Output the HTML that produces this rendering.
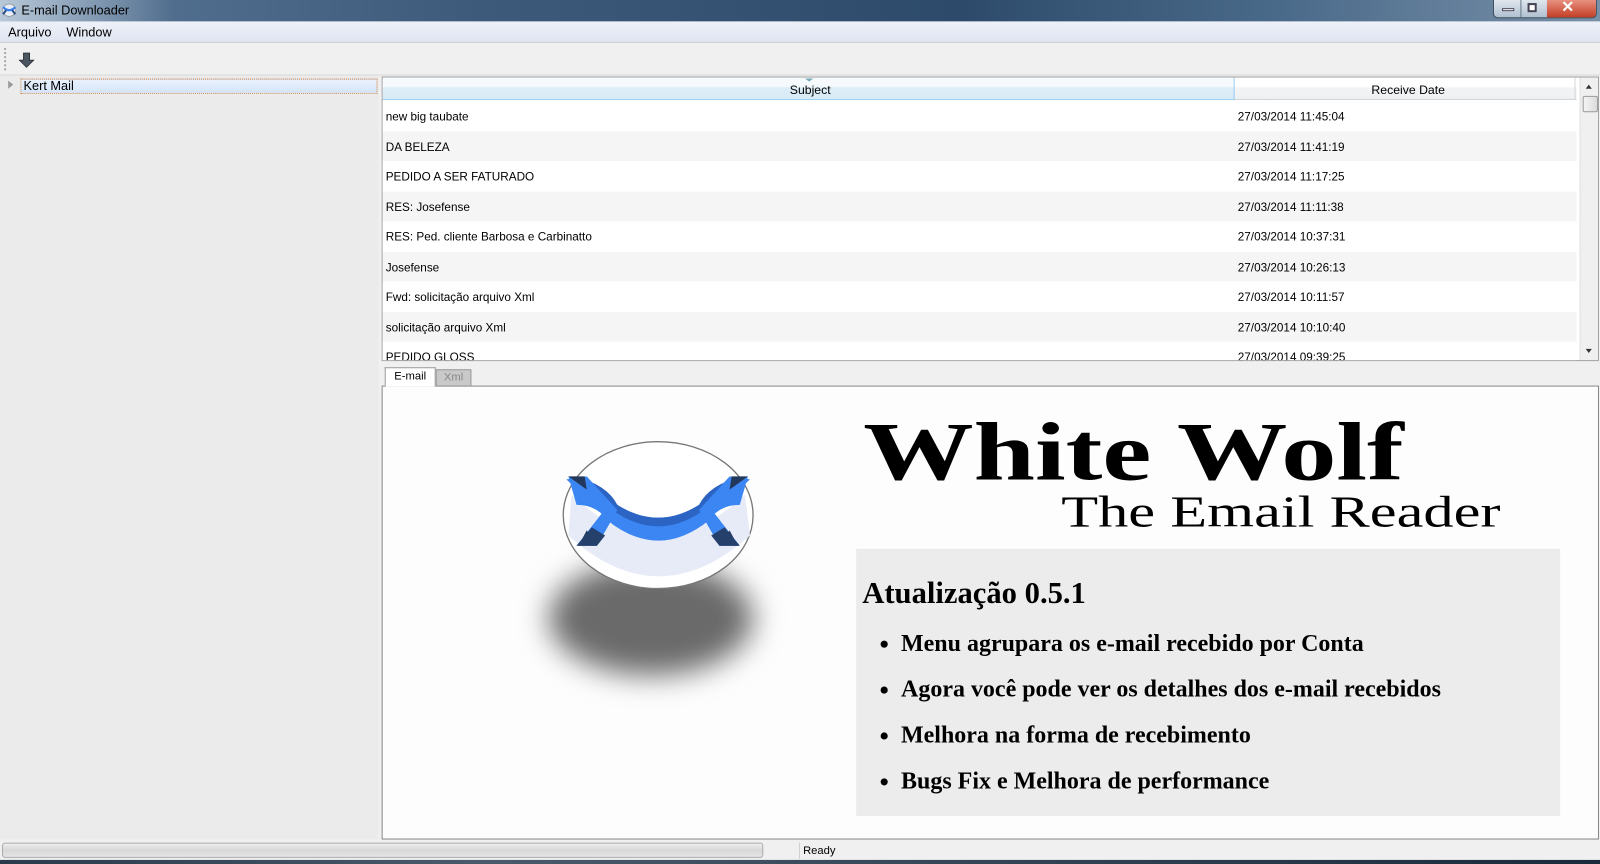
<!DOCTYPE html>
<html><head><meta charset="utf-8"><style>
*{margin:0;padding:0;box-sizing:border-box}
body{width:1600px;height:864px;background:#f0f0f0;position:relative;overflow:hidden;font-family:"Liberation Sans",sans-serif;font-size:12px;color:#000}
.a{position:absolute}
.app{left:0;top:0;width:1568px;height:847px;background:#f0f0f0;overflow:hidden;transform:scale(1.02041,1.02007);transform-origin:0 0}
.row{position:absolute;left:0;width:1170px;height:29.5px;line-height:33px}
.row span{position:absolute;white-space:nowrap}
.serif{font-family:"Liberation Serif",serif}
li{margin-bottom:22px}
</style></head><body>
<div class="a app">
 <div class="a" style="left:0;top:0;width:1568px;height:21px;background:linear-gradient(90deg,#5a7898 0%,#3e5a7a 30%,#2d4a6a 60%,#4a6a8a 80%,#7890a8 100%)"></div>
 <div class="a" style="left:0;top:0;width:170px;height:21px;background:linear-gradient(90deg,#b8c8d8,rgba(184,200,216,0))"></div>
 <svg class="a" style="left:2px;top:3px" width="14" height="14" viewBox="0 0 14 14"><ellipse cx="7" cy="7" rx="6.5" ry="6" fill="#e8eef8" stroke="#888" stroke-width=".6"/><path d="M1 4 Q7 10 13 4" stroke="#3a80e8" stroke-width="2.2" fill="none"/><path d="M1 11 L4 7 M13 11 L10 7" stroke="#2a4a80" stroke-width="2"/></svg>
 <div class="a" style="left:21px;top:3px;font-size:12.5px;color:#000">E-mail Downloader</div>
 <div class="a" style="left:1463px;top:0;width:102px;height:18px;border:1px solid #3a4a5a;border-top:none;border-radius:0 0 5px 5px;background:linear-gradient(#dfe6ee,#b0c0d0);overflow:hidden">
  <div class="a" style="left:26px;top:0;width:1px;height:18px;background:#6a7a8a"></div>
  <div class="a" style="left:52px;top:0;width:49px;height:18px;background:linear-gradient(#e89080,#c03a20)"></div>
  <div class="a" style="left:8px;top:8px;width:12px;height:3px;background:#fff;border:1px solid #445"></div>
  <div class="a" style="left:33px;top:3px;width:9px;height:9px;border:2px solid #445;background:#fff"></div>
  <div class="a" style="left:66px;top:-2px;font-size:15px;font-weight:bold;color:#fff">✕</div>
 </div>
 <div class="a" style="left:0;top:21px;width:1568px;height:21px;background:linear-gradient(#eef1f8,#dfe5f2);border-bottom:1px solid #c8ccd8"></div>
 <div class="a" style="left:8px;top:25px;font-size:12.5px">Arquivo</div>
 <div class="a" style="left:65px;top:25px;font-size:12.5px">Window</div>
 <div class="a" style="left:4px;top:47px;width:2px;height:22px;border-left:2px dotted #aaa"></div>
 <svg class="a" style="left:18px;top:51px" width="16" height="16" viewBox="0 0 16 16"><path d="M5 1h6v7h4l-7 7-7-7h4z" fill="#4a5560" stroke="#2a3038" stroke-width=".8"/></svg>
 <div class="a" style="left:0;top:73px;width:1568px;height:1px;background:#d8d8d8"></div>
 <div class="a" style="left:0;top:74px;width:371px;height:749px;background:#ebebeb"></div>
 <div class="a" style="left:8px;top:79px;width:0;height:0;border-left:5px solid #999;border-top:4px solid transparent;border-bottom:4px solid transparent"></div>
 <div class="a" style="left:20px;top:77px;width:350px;height:15px;background:linear-gradient(#eaf2fc,#d4e4f8);border:1px dotted #d08040;padding-left:2px;line-height:13px;font-size:12.5px">Kert Mail</div>
 <div class="a" style="left:374px;top:75px;width:1193px;height:279px;background:#fff;border:1px solid #a0a0a0;overflow:hidden">
  <div class="a" style="left:0;top:0;width:1170px;height:22px;background:linear-gradient(#f6fafd 40%,#ddeef8 50%,#d8eaf6);border-bottom:1px solid #9cd0ee"></div>
  <div class="a" style="left:834px;top:0;width:1px;height:22px;background:#8cc8f0"></div>
  <div class="a" style="left:835px;top:0;width:335px;height:22px;background:linear-gradient(#fff 40%,#f2f3f5 50%,#f0f1f3);border-bottom:1px solid #d5d5d5"></div>
  <div class="a" style="left:1168px;top:0;width:1px;height:22px;background:#d5d5d5"></div>
  <div class="a" style="left:414px;top:1px;width:0;height:0;border-top:3px solid #7ab;border-left:4px solid transparent;border-right:4px solid transparent"></div>
  <div class="a" style="left:399px;top:5px">Subject</div>
  <div class="a" style="left:969px;top:5px">Receive Date</div>
  <div style="position:absolute;left:0;top:23px;width:1170px;font-size:11.5px">
   <div class="row" style="top:0;background:#fff"><span style="left:3px">new big taubate</span><span style="left:838px">27/03/2014 11:45:04</span></div>
   <div class="row" style="top:29.5px;background:#f5f5f5"><span style="left:3px">DA BELEZA</span><span style="left:838px">27/03/2014 11:41:19</span></div>
   <div class="row" style="top:59px;background:#fff"><span style="left:3px">PEDIDO A SER FATURADO</span><span style="left:838px">27/03/2014 11:17:25</span></div>
   <div class="row" style="top:88.5px;background:#f5f5f5"><span style="left:3px">RES: Josefense</span><span style="left:838px">27/03/2014 11:11:38</span></div>
   <div class="row" style="top:118px;background:#fff"><span style="left:3px">RES: Ped. cliente Barbosa e Carbinatto</span><span style="left:838px">27/03/2014 10:37:31</span></div>
   <div class="row" style="top:147.5px;background:#f5f5f5"><span style="left:3px">Josefense</span><span style="left:838px">27/03/2014 10:26:13</span></div>
   <div class="row" style="top:177px;background:#fff"><span style="left:3px">Fwd: solicitação arquivo Xml</span><span style="left:838px">27/03/2014 10:11:57</span></div>
   <div class="row" style="top:206.5px;background:#f5f5f5"><span style="left:3px">solicitação arquivo Xml</span><span style="left:838px">27/03/2014 10:10:40</span></div>
   <div class="row" style="top:236px;background:#fff"><span style="left:3px">PEDIDO GLOSS</span><span style="left:838px">27/03/2014 09:39:25</span></div>
  </div>
  <div class="a" style="left:1173px;top:0;width:19px;height:277px;background:#f0f0f0;border-left:1px solid #e0e0e0"></div>
  <div class="a" style="left:1179px;top:7px;border-bottom:4px solid #333;border-left:3px solid transparent;border-right:3px solid transparent"></div>
  <div class="a" style="left:1176px;top:18px;width:15px;height:16px;border:1px solid #999;border-radius:2px;background:linear-gradient(90deg,#f4f4f4,#dcdcdc)"></div>
  <div class="a" style="left:1179px;top:266px;border-top:4px solid #333;border-left:3px solid transparent;border-right:3px solid transparent"></div>
 </div>
 <div class="a" style="left:377px;top:360px;width:50px;height:19px;background:#fff;border:1px solid #999;border-bottom:none;z-index:2;text-align:center;line-height:17px;font-size:11px">E-mail</div>
 <div class="a" style="left:427px;top:362px;width:35px;height:17px;background:#c9c9c9;border:1px solid #999;text-align:center;line-height:15px;font-size:11px;color:#888">Xml</div>
 <div class="a" style="left:374px;top:378px;width:1193px;height:445px;background:#fdfdfd;border:1px solid #888"></div>
 <div class="a" style="left:538px;top:550px;width:200px;height:112px;border-radius:50%;background:#6a6a6a;filter:blur(14px)"></div>
 <svg class="a" style="left:545px;top:425px" width="200" height="160" viewBox="0 0 200 160">
  <ellipse cx="100" cy="80" rx="93" ry="72" fill="#fff" stroke="#777" stroke-width="1.3"/>
  <path d="M15 60 Q100 140 185 60 L190 100 Q100 180 12 100Z" fill="#e6ebf7"/>
  <path d="M12 42 Q40 48 60 70 Q100 95 140 70 Q160 48 188 42 L180 70 Q160 70 150 85 Q100 125 50 85 Q40 70 20 70Z" fill="#3b86f2"/>
  <path d="M18 42 Q50 50 60 70 Q100 95 140 70 Q150 50 182 42 L184 50 Q150 55 142 77 Q100 105 58 77 Q50 55 16 50Z" fill="#2c64c4"/>
  <path d="M10 45 L30 42 L60 75 L40 110 L20 110 L45 78Z" fill="#3b86f2"/>
  <path d="M190 45 L170 42 L140 75 L160 110 L180 110 L155 78Z" fill="#3b86f2"/>
  <path d="M12 42 L28 42 L30 55 Z M22 110 L40 110 L30 95Z M188 42 L172 42 L170 55Z M178 110 L160 110 L170 95Z" fill="#23395c"/>
  <path d="M20 110 L40 110 L48 100 L35 92Z M180 110 L160 110 L152 100 L165 92Z" fill="#25406a"/>
 </svg>
 <div class="a serif" style="left:846px;top:393px;font-size:81px;font-weight:bold;line-height:100px;white-space:nowrap;transform:scaleX(1.335);transform-origin:0 0">White Wolf</div>
 <div class="a serif" style="left:1040px;top:474px;font-size:44px;line-height:56px;white-space:nowrap;transform:scaleX(1.345);transform-origin:0 0">The Email Reader</div>
 <div class="a serif" style="left:839px;top:538px;width:690px;height:262px;background:#ececec">
  <div style="position:absolute;left:6px;top:26px;font-size:30px;font-weight:bold;line-height:36px">Atualização 0.5.1</div>
  <ul style="position:absolute;left:44px;top:82px;font-size:23.5px;font-weight:bold;line-height:23px;list-style:disc;white-space:nowrap">
   <li>Menu agrupara os e-mail recebido por Conta</li>
   <li>Agora você pode ver os detalhes dos e-mail recebidos</li>
   <li>Melhora na forma de recebimento</li>
   <li>Bugs Fix e Melhora de performance</li>
  </ul>
 </div>
 <div class="a" style="left:2px;top:826px;width:746px;height:15px;border:1px solid #aaa;border-radius:3px;background:linear-gradient(#eee,#d8d8d8 50%,#e4e4e4)"></div>
 <div class="a" style="left:783px;top:826px;width:1px;height:16px;background:#d0d0d0"></div>
 <div class="a" style="left:787px;top:828px;font-size:11px">Ready</div>
 <div class="a" style="left:0;top:843px;width:1568px;height:4px;background:linear-gradient(90deg,#2a3a4a,#4a5a6a 30%,#1a2a3a)"></div>
</div>
</body></html>
